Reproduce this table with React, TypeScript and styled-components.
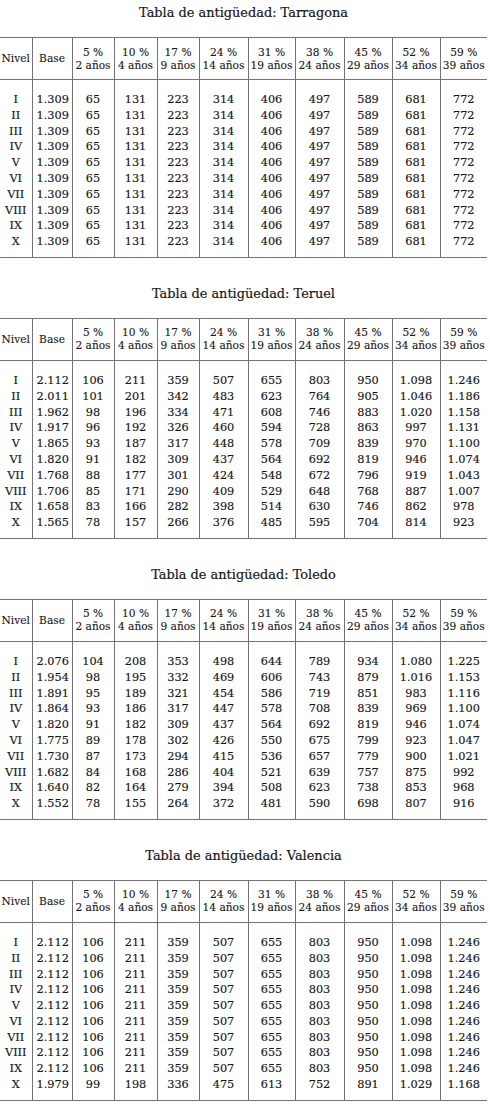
import React from 'react'
import styled, { createGlobalStyle } from 'styled-components'

const GlobalStyle = createGlobalStyle`
  html, body {
    margin: 0;
    padding: 0;
    background: #ffffff;
  }
  body {
    font-family: "DejaVu Serif", "Liberation Serif", serif;
    color: #161616;
  }
`

type Row = [string, string, ...string[]]

const headers = [
  ['5 %', '2 años'],
  ['10 %', '4 años'],
  ['17 %', '9 años'],
  ['24 %', '14 años'],
  ['31 %', '19 años'],
  ['38 %', '24 años'],
  ['45 %', '29 años'],
  ['52 %', '34 años'],
  ['59 %', '39 años'],
]

const widths = [32, 40, 42, 43, 42, 49, 47, 49, 48, 48, 47]

const levels = ['I', 'II', 'III', 'IV', 'V', 'VI', 'VII', 'VIII', 'IX', 'X']

const same = (values: string[]): Row[] =>
  levels.map((lv) => [lv, ...values] as Row)

const valenciaTop = ['2.112', '106', '211', '359', '507', '655', '803', '950', '1.098', '1.246']

const tables: { city: string; rows: Row[] }[] = [
  {
    city: 'Tarragona',
    rows: same(['1.309', '65', '131', '223', '314', '406', '497', '589', '681', '772']),
  },
  {
    city: 'Teruel',
    rows: [
      ['I', '2.112', '106', '211', '359', '507', '655', '803', '950', '1.098', '1.246'],
      ['II', '2.011', '101', '201', '342', '483', '623', '764', '905', '1.046', '1.186'],
      ['III', '1.962', '98', '196', '334', '471', '608', '746', '883', '1.020', '1.158'],
      ['IV', '1.917', '96', '192', '326', '460', '594', '728', '863', '997', '1.131'],
      ['V', '1.865', '93', '187', '317', '448', '578', '709', '839', '970', '1.100'],
      ['VI', '1.820', '91', '182', '309', '437', '564', '692', '819', '946', '1.074'],
      ['VII', '1.768', '88', '177', '301', '424', '548', '672', '796', '919', '1.043'],
      ['VIII', '1.706', '85', '171', '290', '409', '529', '648', '768', '887', '1.007'],
      ['IX', '1.658', '83', '166', '282', '398', '514', '630', '746', '862', '978'],
      ['X', '1.565', '78', '157', '266', '376', '485', '595', '704', '814', '923'],
    ],
  },
  {
    city: 'Toledo',
    rows: [
      ['I', '2.076', '104', '208', '353', '498', '644', '789', '934', '1.080', '1.225'],
      ['II', '1.954', '98', '195', '332', '469', '606', '743', '879', '1.016', '1.153'],
      ['III', '1.891', '95', '189', '321', '454', '586', '719', '851', '983', '1.116'],
      ['IV', '1.864', '93', '186', '317', '447', '578', '708', '839', '969', '1.100'],
      ['V', '1.820', '91', '182', '309', '437', '564', '692', '819', '946', '1.074'],
      ['VI', '1.775', '89', '178', '302', '426', '550', '675', '799', '923', '1.047'],
      ['VII', '1.730', '87', '173', '294', '415', '536', '657', '779', '900', '1.021'],
      ['VIII', '1.682', '84', '168', '286', '404', '521', '639', '757', '875', '992'],
      ['IX', '1.640', '82', '164', '279', '394', '508', '623', '738', '853', '968'],
      ['X', '1.552', '78', '155', '264', '372', '481', '590', '698', '807', '916'],
    ],
  },
  {
    city: 'Valencia',
    rows: [
      ...levels.slice(0, 9).map((lv) => [lv, ...valenciaTop] as Row),
      ['X', '1.979', '99', '198', '336', '475', '613', '752', '891', '1.029', '1.168'],
    ],
  },
]

const AntiguedadTable: React.FC<{ city: string; rows: Row[] }> = ({ city, rows }) => (
  <Section>
    <Title>Tabla de antigüedad: {city}</Title>
    <Table>
      <colgroup>
        {widths.map((w, i) => (
          <col key={i} style={{ width: w }} />
        ))}
      </colgroup>
      <thead>
        <tr>
          <HeadCell $first>Nivel</HeadCell>
          <HeadCell>Base</HeadCell>
          {headers.map(([pct, years]) => (
            <HeadCell key={pct}>
              <div>{pct}</div>
              <div>{years}</div>
            </HeadCell>
          ))}
        </tr>
      </thead>
      <tbody>
        {rows.map((row, r) => (
          <tr key={row[0]}>
            {row.map((value, c) => (
              <Cell
                key={c}
                $first={c === 0}
                $left={c === 1}
                $top={r === 0}
                $bottom={r === rows.length - 1}
              >
                {value}
              </Cell>
            ))}
          </tr>
        ))}
      </tbody>
    </Table>
  </Section>
)

const App: React.FC = () => (
  <>
    <GlobalStyle />
    <Page>
      {tables.map((t) => (
        <AntiguedadTable key={t.city} city={t.city} rows={t.rows} />
      ))}
    </Page>
  </>
)

export default App

const Page = styled.div`
  width: 490px;
  display: flex;
  flex-direction: column;
`
const Section = styled.section`
  display: flex;
  flex-direction: column;
  width: 487px;
  margin-bottom: 23px;
`
const Title = styled.h2`
  margin: 0;
  height: 37px;
  line-height: 26px;
  font-size: 12.9px;
  font-weight: normal;
  text-align: center;
  -webkit-text-stroke: 0.2px #161616;
`
const Table = styled.table`
  width: 487px;
  table-layout: fixed;
  border-collapse: collapse;
  border-top: 1px solid #737373;
  border-bottom: 1px solid #737373;
`
const HeadCell = styled.th<{ $first?: boolean }>`
  height: 41px;
  padding: 0;
  font-weight: normal;
  font-size: 10.6px;
  line-height: 13px;
  text-align: center;
  vertical-align: middle;
  white-space: nowrap;
  -webkit-text-stroke: 0.1px #161616;
  border-bottom: 1px solid #737373;
  border-left: ${(p) => (p.$first ? 'none' : '1px solid #737373')};
`
const Cell = styled.td<{
  $first?: boolean
  $left?: boolean
  $top?: boolean
  $bottom?: boolean
}>`
  padding-top: ${(p) => (p.$top ? '12px' : '0')};
  padding-bottom: ${(p) => (p.$bottom ? '7px' : '0')};
  padding-left: ${(p) => (p.$left ? '4px' : '0')};
  padding-right: 0;
  height: 15.8px;
  font-size: 11.3px;
  line-height: 15.8px;
  text-align: ${(p) => (p.$left ? 'left' : 'center')};
  white-space: nowrap;
  -webkit-text-stroke: 0.15px #161616;
  border-left: ${(p) => (p.$first ? 'none' : '1px solid #737373')};
`
